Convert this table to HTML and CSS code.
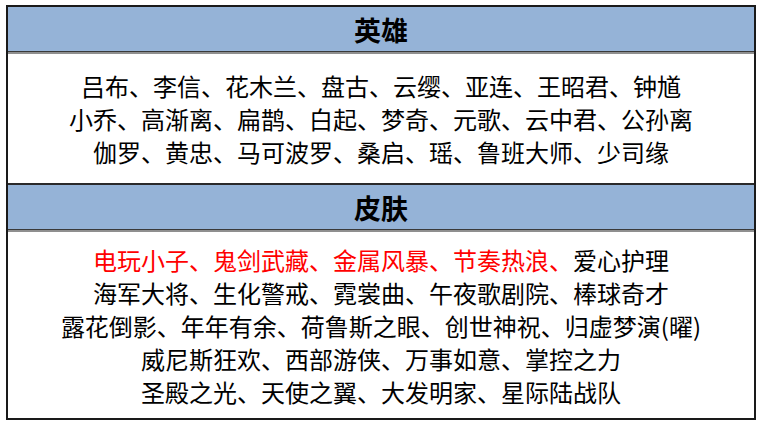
FILE: index.html
```html
<!DOCTYPE html>
<html lang="zh">
<head>
<meta charset="utf-8">
<link rel="stylesheet" href="styles.css">
</head>
<body>
<div class="sheet">
  <div class="head">英雄</div>
  <div class="cell cell-heroes">
    <p>吕布、李信、花木兰、盘古、云缨、亚连、王昭君、钟馗</p>
    <p>小乔、高渐离、扁鹊、白起、梦奇、元歌、云中君、公孙离</p>
    <p>伽罗、黄忠、马可波罗、桑启、瑶、鲁班大师、少司缘</p>
  </div>
  <div class="head head-second">皮肤</div>
  <div class="cell cell-skins">
    <p><span class="red">电玩小子、鬼剑武藏、金属风暴、节奏热浪、</span>爱心护理</p>
    <p>海军大将、生化警戒、霓裳曲、午夜歌剧院、棒球奇才</p>
    <p>露花倒影、年年有余、荷鲁斯之眼、创世神祝、归虚梦演(曜)</p>
    <p>威尼斯狂欢、西部游侠、万事如意、掌控之力</p>
    <p>圣殿之光、天使之翼、大发明家、星际陆战队</p>
  </div>
</div>
</body>
</html>
```
FILE: styles.css
```css
html, body {
  margin: 0;
  padding: 0;
  background: #ffffff;
}
body {
  font-family: "Noto Sans CJK SC", "Noto Sans", sans-serif;
  color: #000000;
}
.sheet {
  margin: 5px 0 0 6px;
  width: 750px;
  height: 415px;
  box-sizing: border-box;
  border: 2px solid #1a1a1a;
  display: flex;
  flex-direction: column;
}
.head {
  height: 44px;
  background: #95b3d7;
  border-bottom: 1px solid #3a3a3a;
  display: flex;
  align-items: center;
  justify-content: center;
  font-size: 27px;
  font-weight: 700;
  line-height: 1;
}
.head-second {
  border-top: 2px solid #2a2a2a;
}
.cell {
  border-top: 2px solid #8f8f8f;
  display: flex;
  flex-direction: column;
  align-items: center;
  justify-content: center;
  font-size: 24px;
  line-height: 33px;
}
.cell p {
  margin: 0;
  white-space: nowrap;
}
.cell-heroes {
  height: 129px;
}
.cell-skins {
  flex: 1;
}
.red {
  color: #ff0000;
}
```
